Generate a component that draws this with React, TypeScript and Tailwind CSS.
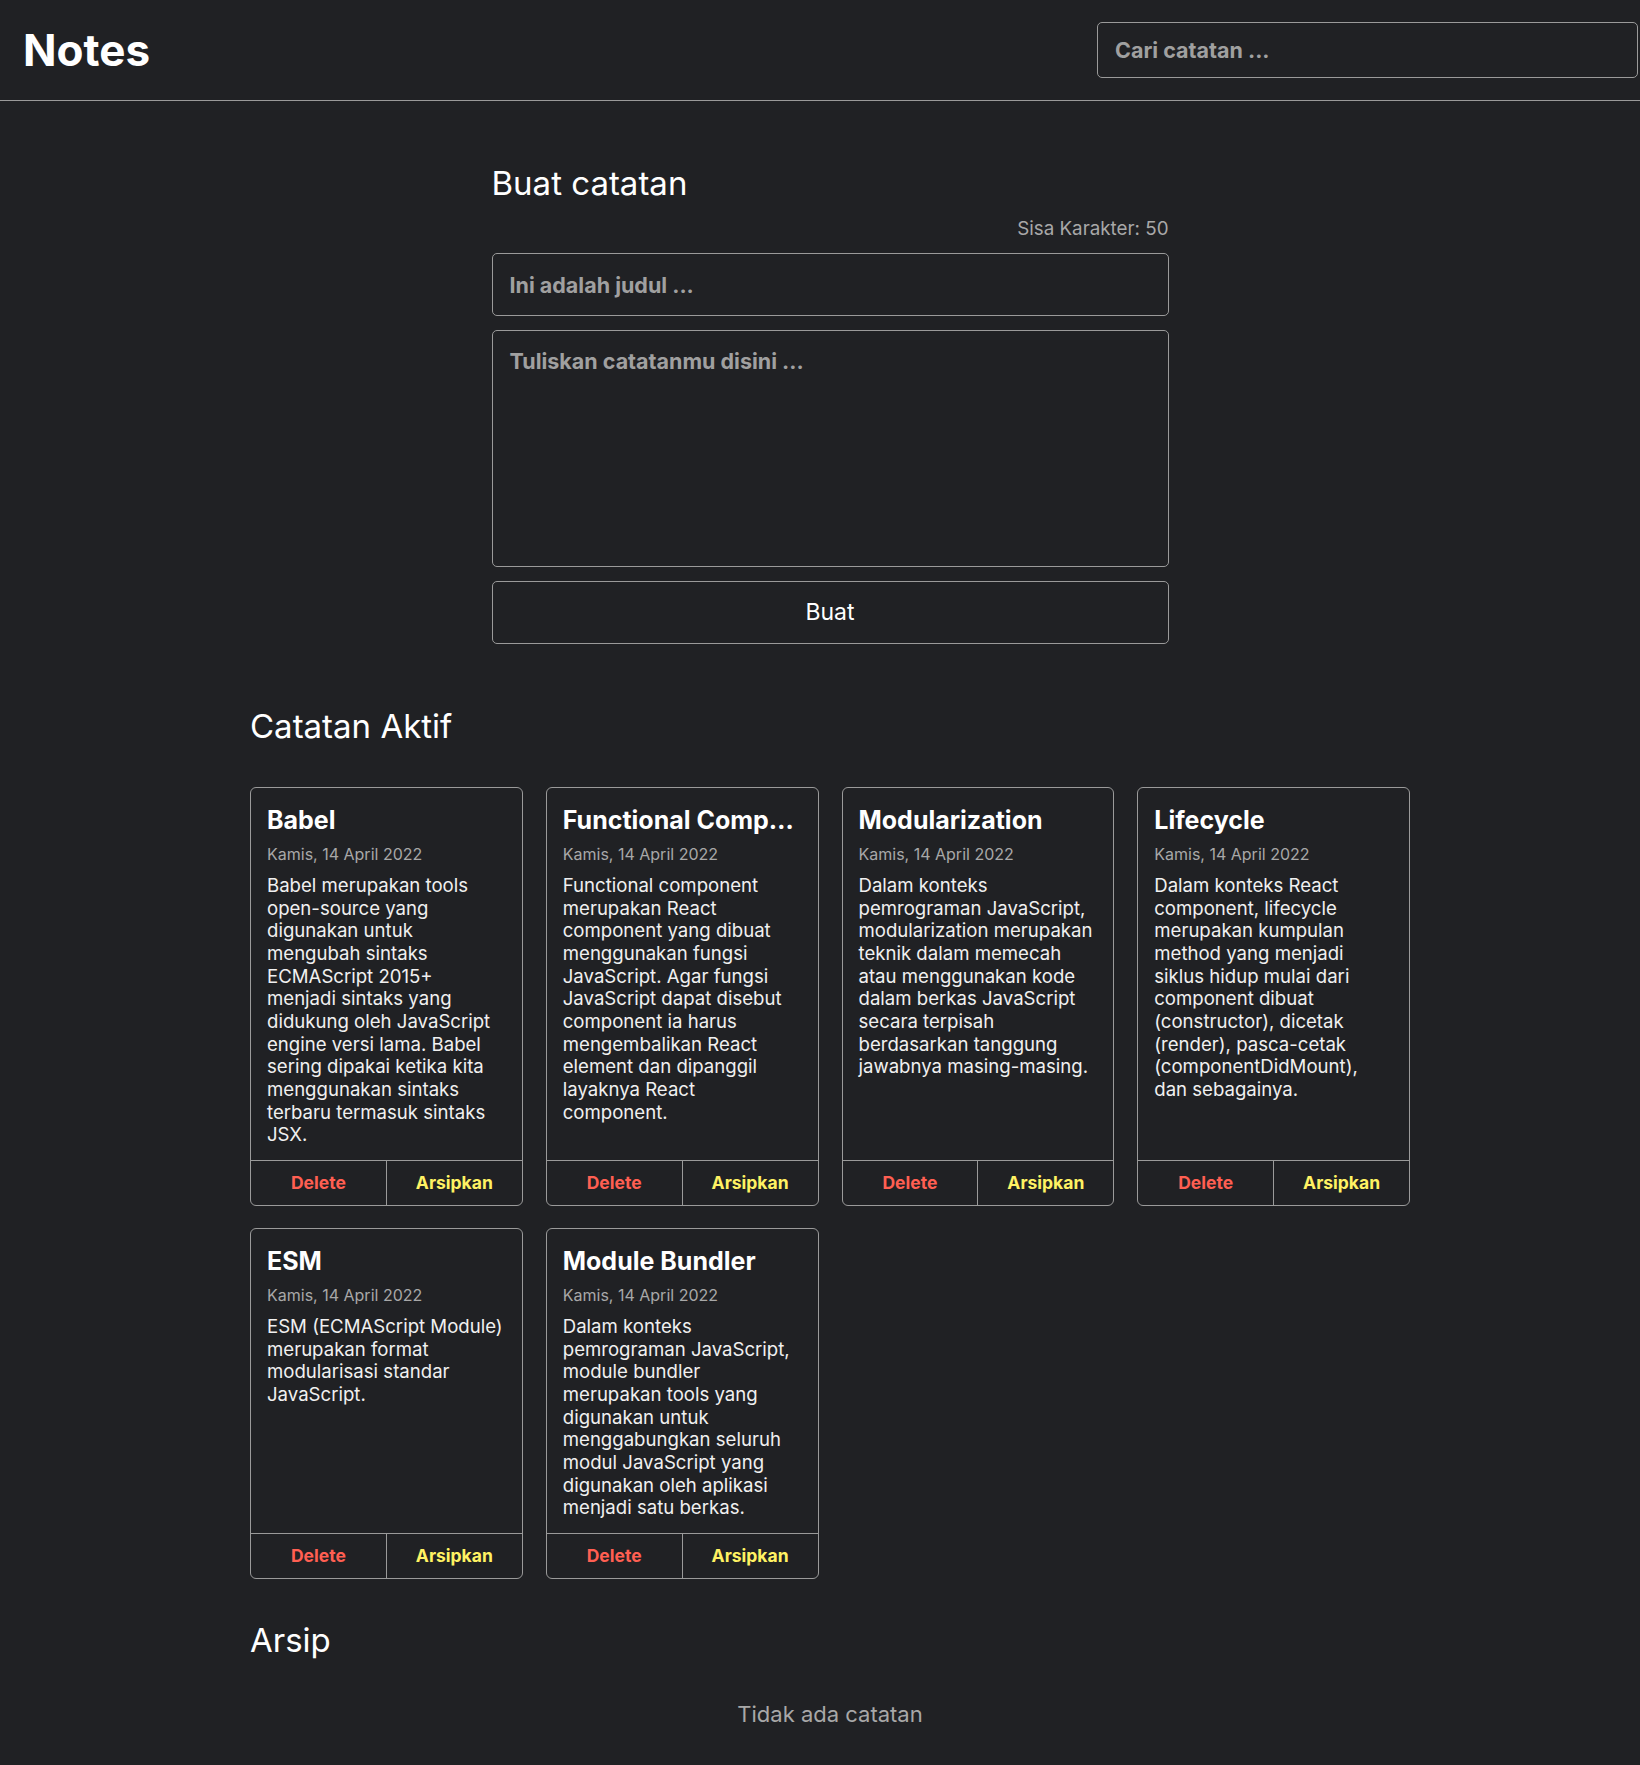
type Note = {
  id: number
  title: string
  date: string
  body: string
}

const notes: Note[] = [
  {
    id: 1,
    title: "Babel",
    date: "Kamis, 14 April 2022",
    body: "Babel merupakan tools open-source yang digunakan untuk mengubah sintaks ECMAScript 2015+ menjadi sintaks yang didukung oleh JavaScript engine versi lama. Babel sering dipakai ketika kita menggunakan sintaks terbaru termasuk sintaks JSX.",
  },
  {
    id: 2,
    title: "Functional Component",
    date: "Kamis, 14 April 2022",
    body: "Functional component merupakan React component yang dibuat menggunakan fungsi JavaScript. Agar fungsi JavaScript dapat disebut component ia harus mengembalikan React element dan dipanggil layaknya React component.",
  },
  {
    id: 3,
    title: "Modularization",
    date: "Kamis, 14 April 2022",
    body: "Dalam konteks pemrograman JavaScript, modularization merupakan teknik dalam memecah atau menggunakan kode dalam berkas JavaScript secara terpisah berdasarkan tanggung jawabnya masing-masing.",
  },
  {
    id: 4,
    title: "Lifecycle",
    date: "Kamis, 14 April 2022",
    body: "Dalam konteks React component, lifecycle merupakan kumpulan method yang menjadi siklus hidup mulai dari component dibuat (constructor), dicetak (render), pasca-cetak (componentDidMount), dan sebagainya.",
  },
  {
    id: 5,
    title: "ESM",
    date: "Kamis, 14 April 2022",
    body: "ESM (ECMAScript Module) merupakan format modularisasi standar JavaScript.",
  },
  {
    id: 6,
    title: "Module Bundler",
    date: "Kamis, 14 April 2022",
    body: "Dalam konteks pemrograman JavaScript, module bundler merupakan tools yang digunakan untuk menggabungkan seluruh modul JavaScript yang digunakan oleh aplikasi menjadi satu berkas.",
  },
]

function NoteItem({ note }: { note: Note }) {
  return (
    <div className="flex flex-col border border-[#9a9a9a] rounded-[6px]">
      <div className="flex-1 px-[16px] pt-[18px] pb-[14px]">
        <h3 className="text-[25px] leading-[29px] font-bold text-white truncate">{note.title}</h3>
        <p className="mt-[9px] text-[16px] leading-[20px] text-[#a8a8a8]">{note.date}</p>
        <p className="mt-[10px] text-[18.6px] leading-[22.67px] text-[#f0f0f0]">{note.body}</p>
      </div>
      <div className="flex border-t border-[#9a9a9a]">
        <button className="flex-1 h-[44px] border-r border-[#9a9a9a] text-[17.5px] font-bold text-[#ff5f52]">
          Delete
        </button>
        <button className="flex-1 h-[44px] text-[17.5px] font-bold text-[#fff263]">
          Arsipkan
        </button>
      </div>
    </div>
  )
}

export default function App() {
  return (
    <div className="min-h-screen bg-[#202124] text-white font-['Inter','Noto_Sans',sans-serif]">
      <header className="flex items-center justify-between h-[101px] pl-[23px] pr-[2px] border-b border-[#9a9a9a]">
        <h1 className="text-[44px] leading-[56px] font-bold text-white">Notes</h1>
        <input
          type="text"
          placeholder="Cari catatan ..."
          className="w-[541px] h-[56px] px-[17px] bg-transparent border border-[#9a9a9a] rounded-[5px] text-[21.5px] font-bold text-white placeholder:text-[#a0a0a0] outline-none"
        />
      </header>

      <main className="w-[1180px] mx-auto pl-[20px] pt-[62px] pb-[40px]">
        <div className="w-[677px] mx-auto">
          <h2 className="text-[33px] leading-[40px] font-normal">Buat catatan</h2>
          <p className="mt-[15px] text-[18.8px] leading-[22px] text-right text-[#a8a8a8]">Sisa Karakter: 50</p>
          <input
            type="text"
            placeholder="Ini adalah judul ..."
            className="block w-full mt-[13px] h-[63px] px-[17px] bg-transparent border border-[#9a9a9a] rounded-[5px] text-[21.5px] font-bold text-white placeholder:text-[#a0a0a0] outline-none"
          />
          <textarea
            placeholder="Tuliskan catatanmu disini ..."
            className="block w-full mt-[14px] h-[237px] px-[17px] py-[17px] leading-[26px] bg-transparent border border-[#9a9a9a] rounded-[5px] text-[21.5px] font-bold text-white placeholder:text-[#a0a0a0] outline-none resize-none"
          />
          <button className="block w-full mt-[14px] h-[63px] bg-transparent border border-[#9a9a9a] rounded-[5px] text-[23px] text-white">
            Buat
          </button>
        </div>

        <h2 className="mt-[62px] text-[33px] leading-[40px] font-normal">Catatan Aktif</h2>
        <div className="mt-[41px] grid grid-cols-4 gap-x-[23px] gap-y-[22px]">
          {notes.map((note) => (
            <NoteItem key={note.id} note={note} />
          ))}
        </div>

        <h2 className="mt-[41px] text-[33px] leading-[40px] font-normal">Arsip</h2>
        <p className="mt-[41px] text-center text-[22px] leading-[27px] text-[#a8a8a8]">Tidak ada catatan</p>
      </main>
    </div>
  )
}
